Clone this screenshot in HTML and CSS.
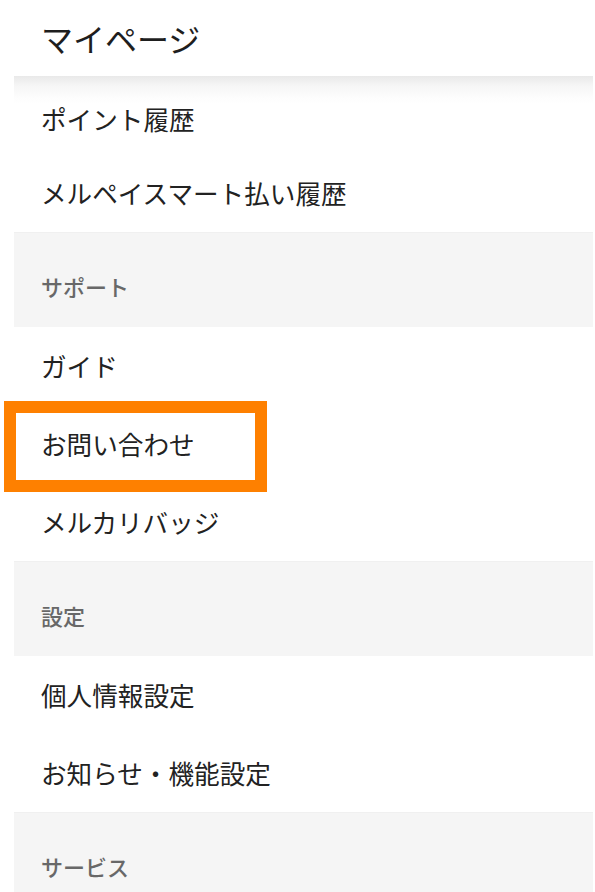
FILE: index.html
```html
<!DOCTYPE html>
<html lang="ja">
<head>
<meta charset="utf-8">
<title>マイページ</title>
<link rel="stylesheet" href="styles.css">
</head>
<body>
<header class="header">
  <h1 class="title">マイページ</h1>
</header>
<main class="panel">
  <div class="item item-first">ポイント履歴</div>
  <div class="item">メルペイスマート払い履歴</div>
  <div class="section">サポート</div>
  <div class="item">ガイド</div>
  <div class="item item-marked">お問い合わせ<span class="highlight"></span></div>
  <div class="item">メルカリバッジ</div>
  <div class="section">設定</div>
  <div class="item">個人情報設定</div>
  <div class="item">お知らせ・機能設定</div>
  <div class="section">サービス</div>
</main>
</body>
</html>
```
FILE: styles.css
```css
html, body {
  margin: 0;
  padding: 0;
  background: #ffffff;
}
body {
  font-family: "Noto Sans CJK JP", "Noto Sans", sans-serif;
  color: #222222;
  width: 595px;
  overflow: hidden;
}
.header {
  height: 76px;
  display: flex;
  align-items: center;
  padding-left: 41px;
  box-sizing: border-box;
}
.title {
  margin: 0;
  font-size: 32px;
  font-weight: 400;
  line-height: 1;
  color: #1e1e1e;
}
.panel {
  display: flex;
  flex-direction: column;
  margin: 0 2px 0 14px;
  background: linear-gradient(to bottom, #e9e9e9 0px, #f6f6f6 10px, #fdfdfd 22px, #ffffff 28px);
}
.item {
  position: relative;
  height: 78px;
  box-sizing: border-box;
  display: flex;
  align-items: center;
  padding-left: 27px;
  font-size: 25.6px;
  line-height: 1;
  color: #222222;
}
.item-first {
  padding-top: 8px;
}
.section {
  height: 95px;
  box-sizing: border-box;
  display: flex;
  align-items: center;
  padding: 12px 0 0 27px;
  background: #f5f5f5;
  border-top: 1px solid #f0f0f0;
  font-size: 22px;
  font-weight: 500;
  line-height: 1;
  color: #686868;
}
.highlight {
  position: absolute;
  left: -10px;
  top: -4px;
  width: 263px;
  height: 91px;
  box-sizing: border-box;
  border: 12px solid #fe8000;
  pointer-events: none;
}
```
